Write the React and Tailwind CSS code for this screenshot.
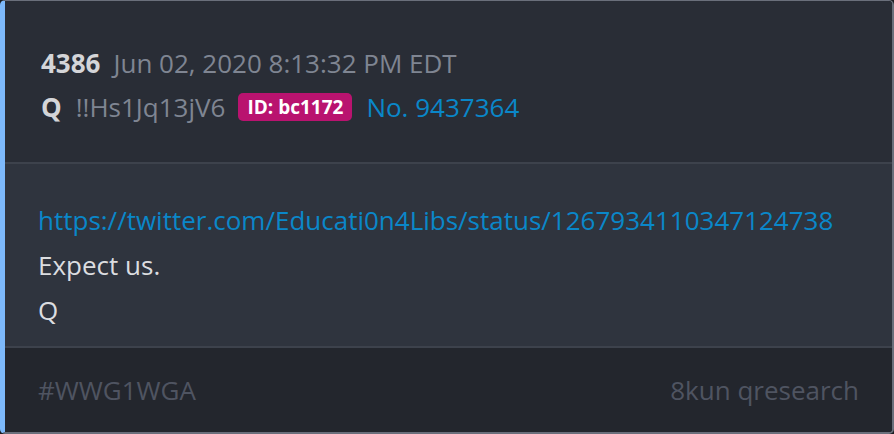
export default function App() {
  return (
    <div className="w-[894px] h-[434px] bg-[#1b1d22] font-['Open_Sans',sans-serif]">
      <div className="h-full flex flex-col rounded-[5px] overflow-hidden border-t border-r-2 border-b-2 border-[#6a6f7b] border-l-[5px] border-l-[#7db9fb]">
        <div className="bg-[#292d36] pt-[40px] pb-[33px] px-[36px] text-[26px] leading-[44px]">
          <div className="flex items-center gap-[13px]">
            <span className="font-bold text-[#d4d5d8]">4386</span>
            <span className="text-[#7f8592]">Jun 02, 2020 8:13:32 PM EDT</span>
          </div>
          <div className="flex items-center">
            <span className="font-bold text-[#d4d5d8]">Q</span>
            <span className="ml-[14px] text-[#7f8592]">!!Hs1Jq13jV6</span>
            <span className="ml-[13px] rounded-[5px] bg-[#b9136f] px-[9px] text-[19px] leading-[28px] font-bold text-white">ID: bc1172</span>
            <span className="ml-[14px] text-[#0a87c9]">No. 9437364</span>
          </div>
        </div>
        <div className="h-[2px] bg-[#3d424c]" />
        <div className="bg-[#2f343e] pt-[34px] pb-[12px] px-[33px] text-[26px] leading-[45px] text-[#dcdde0] h-[182px]">
          <div className="text-[#0a87c9]">https://twitter.com/Educati0n4Libs/status/1267934110347124738</div>
          <div>Expect us.</div>
          <div>Q</div>
        </div>
        <div className="h-[2px] bg-[#3d424c]" />
        <div className="flex-1 bg-[#23262d] flex items-center justify-between px-[33px] text-[26px] text-[#4f5461]">
          <span>#WWG1WGA</span>
          <span>8kun qresearch</span>
        </div>
      </div>
    </div>
  );
}
